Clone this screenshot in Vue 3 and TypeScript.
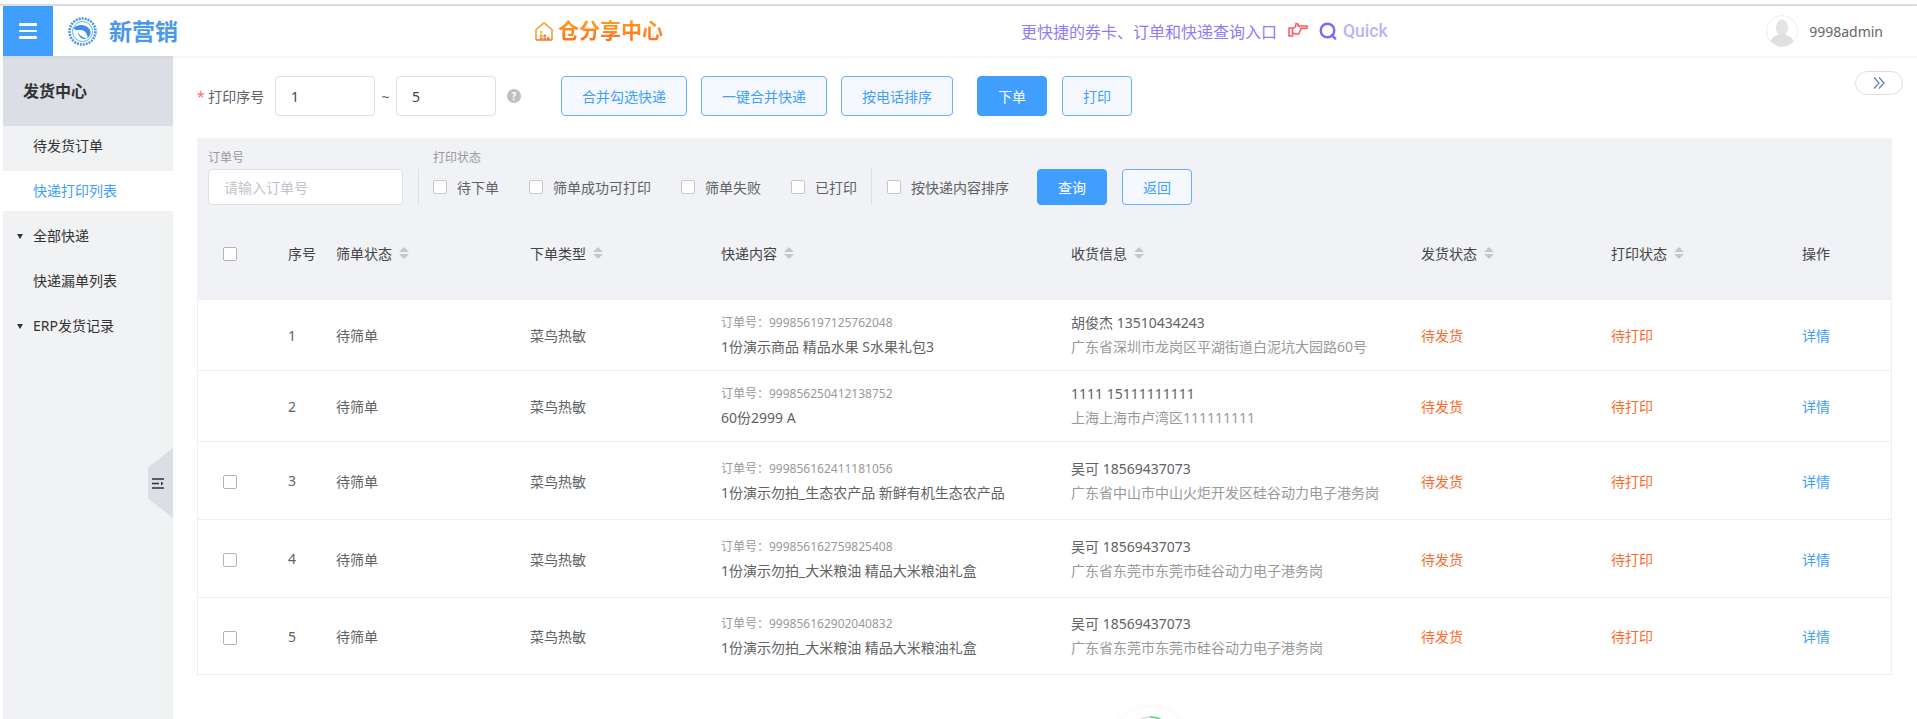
<template>
  <div class="app">
    <header class="topbar">
      <button type="button" class="menu-btn" aria-label="菜单">
        <span></span><span></span><span></span>
      </button>
      <svg class="logo" viewBox="0 0 29 29" fill="none">
        <circle cx="14.5" cy="14.5" r="13" stroke="#4a98ea" stroke-width="2.6" stroke-dasharray="2 1" />
        <circle cx="14.5" cy="14.5" r="10" fill="#fff" stroke="#4a98ea" stroke-width="0.8" />
        <path d="M5.5 11c4-4 12-4 16 1 2 3 1 7-2 9 0-5-3-8-7-8-3 0-5 1-7-2z" fill="#3f8fe4" />
        <path d="M10 15c2 4 5 6 9 6-3 2-8 1-9-6z" fill="#3f8fe4" />
      </svg>
      <span class="brand">新营销</span>

      <svg class="house" viewBox="0 0 18 19" fill="none">
        <path d="M1 18V7.500L9 1l8 6.500V18" stroke="#f59a23" stroke-width="1.500" />
        <path d="M1 18h16" stroke="#f5781f" stroke-width="1.500" />
        <rect x="5" y="9" width="2.500" height="2.500" fill="#f7c531" />
        <rect x="5" y="12.500" width="2.500" height="2.500" fill="#f7a631" />
        <rect x="8.500" y="12.500" width="2.500" height="2.500" fill="#f58a2a" />
        <rect x="5" y="15.500" width="2.500" height="2" fill="#f5781f" />
        <rect x="8.500" y="15.500" width="2.500" height="2" fill="#f5701f" />
        <rect x="12" y="15.500" width="2.500" height="2" fill="#f0601a" />
      </svg>
      <span class="share-title">仓分享中心</span>

      <span class="promo">更快捷的券卡、订单和快递查询入口</span>
      <svg class="hand" viewBox="0 0 20 15" fill="none" stroke="#ff5a5f" stroke-width="1.500">
        <path d="M1 6h3.500v8H1z" />
        <path d="M4.500 7 7.500 4.500 8 1.500l2 .5v2h9v2.200h-6.500l.5 1.300-1 1.500-.5 1.500-1 1.500H7l-2.500-1" />
      </svg>
      <svg class="quick-icon" viewBox="0 0 18 18" fill="none" stroke="#7a6af6" stroke-width="2.400">
        <circle cx="8.500" cy="8.500" r="6.800" />
        <path d="m12.800 13 3.400 3.600" stroke-linecap="round" />
      </svg>
      <span class="quick">Quick</span>

      <div class="user">
        <svg class="avatar" viewBox="0 0 32 32">
          <circle cx="16" cy="16" r="15.500" fill="#fff" stroke="#eee" />
          <ellipse cx="16" cy="12.500" rx="6" ry="8" fill="#e4e4e4" />
          <path d="M4.500 26c2-5 7-5.500 8.500-7h6c1.500 1.500 6.500 2 8.500 7-3 3.500-7 5.500-11.500 5.500S7.500 29.500 4.500 26z" fill="#e0e0e0" />
        </svg>
        <span>9998admin</span>
      </div>
    </header>

    <div class="body">
      <aside class="sidebar">
        <div class="side-title">发货中心</div>
        <nav class="side-nav">
          <div
            v-for="item in navItems"
            :key="item.label"
            class="side-item"
            :class="{ active: item.active }"
          >
            <i v-if="item.group" class="side-arrow"></i>
            {{ item.label }}
          </div>
        </nav>
        <div class="side-toggle">
          <svg viewBox="0 0 12 11" fill="none" stroke="#333" stroke-width="1.400">
            <path d="M0 1h12M0 5.500h7M0 10h12" />
            <path d="M9 3.500 11.500 5.500 9 7.500z" fill="#333" stroke="none" />
          </svg>
        </div>
      </aside>

      <main class="main">
        <div class="toolbar">
          <label class="field-label"><em>*</em> 打印序号</label>
          <input v-model="rangeFrom" class="input range-input" type="text" />
          <span class="tilde">~</span>
          <input v-model="rangeTo" class="input range-input" type="text" />
          <span class="help">?</span>
          <div class="actions">
            <button type="button" class="btn btn-plain">合并勾选快递</button>
            <button type="button" class="btn btn-plain">一键合并快递</button>
            <button type="button" class="btn btn-plain">按电话排序</button>
            <button type="button" class="btn btn-primary btn-order">下单</button>
            <button type="button" class="btn btn-plain btn-print">打印</button>
          </div>
          <button type="button" class="pill" aria-label="展开">
            <svg viewBox="0 0 12 12" fill="none" stroke="#5f7fb8" stroke-width="1.200">
              <path d="m1 .5 5 5.500-5 5.500M6 .5l5 5.500-5 5.500" />
            </svg>
          </button>
        </div>

        <section class="panel">
          <div class="filters">
            <div class="filter-group">
              <div class="filter-label">订单号</div>
              <input class="input order-input" type="text" placeholder="请输入订单号" />
            </div>
            <i class="divider"></i>
            <div class="filter-group">
              <div class="filter-label">打印状态</div>
              <div class="checks">
                <label v-for="s in printStates" :key="s" class="check">
                  <i class="box"></i>{{ s }}
                </label>
              </div>
            </div>
            <i class="divider divider-2"></i>
            <label class="check check-sort"><i class="box"></i>按快递内容排序</label>
            <button type="button" class="btn btn-primary btn-query">查询</button>
            <button type="button" class="btn btn-plain btn-back">返回</button>
          </div>

          <table class="table">
            <colgroup>
              <col v-for="(w, i) in colWidths" :key="i" :style="{ width: w + 'px' }" />
            </colgroup>
            <thead>
              <tr>
                <th class="cell-check"><i class="box box-row"></i></th>
                <th v-for="col in columns" :key="col.label">
                  {{ col.label }}<span v-if="col.sortable" class="sort"><i></i><i></i></span>
                </th>
              </tr>
            </thead>
            <tbody>
              <tr v-for="row in rows" :key="row.no" :class="{ short: !row.selectable }">
                <td class="cell-check"><i v-if="row.selectable" class="box box-row"></i></td>
                <td>{{ row.no }}</td>
                <td>待筛单</td>
                <td>菜鸟热敏</td>
                <td>
                  <div class="sub small">订单号：{{ row.orderNo }}</div>
                  <div class="line">{{ row.goods }}</div>
                </td>
                <td>
                  <div class="line">{{ row.receiver }}</div>
                  <div class="sub">{{ row.address }}</div>
                </td>
                <td class="warn">待发货</td>
                <td class="warn">待打印</td>
                <td class="link">详情</td>
              </tr>
            </tbody>
          </table>
        </section>
      </main>
    </div>

    <div class="float-ball">
      <svg viewBox="0 0 40 20" fill="none" stroke-width="1.500">
        <path d="M3 12C8 5 14 3 20 3" stroke="#d9d9d9" />
        <path d="M20 3c5 0 10 1 14 5" stroke="#4cd964" />
      </svg>
    </div>
  </div>
</template>

<script setup lang="ts">
import { ref } from 'vue'

interface OrderRow {
  no: number
  selectable: boolean
  orderNo: string
  goods: string
  receiver: string
  address: string
}

const rangeFrom = ref('1')
const rangeTo = ref('5')

const navItems = [
  { label: '待发货订单' },
  { label: '快递打印列表', active: true },
  { label: '全部快递', group: true },
  { label: '快递漏单列表' },
  { label: 'ERP发货记录', group: true },
]

const printStates = ['待下单', '筛单成功可打印', '筛单失败', '已打印']

const colWidths = [91, 48, 194, 191, 350, 350, 190, 191, 90]

const columns = [
  { label: '序号' },
  { label: '筛单状态', sortable: true },
  { label: '下单类型', sortable: true },
  { label: '快递内容', sortable: true },
  { label: '收货信息', sortable: true },
  { label: '发货状态', sortable: true },
  { label: '打印状态', sortable: true },
  { label: '操作' },
]

const rows: OrderRow[] = [
  {
    no: 1,
    selectable: false,
    orderNo: '999856197125762048',
    goods: '1份演示商品 精品水果 S水果礼包3',
    receiver: '胡俊杰 13510434243',
    address: '广东省深圳市龙岗区平湖街道白泥坑大园路60号',
  },
  {
    no: 2,
    selectable: false,
    orderNo: '999856250412138752',
    goods: '60份2999 A',
    receiver: '1111 15111111111',
    address: '上海上海市卢湾区111111111',
  },
  {
    no: 3,
    selectable: true,
    orderNo: '999856162411181056',
    goods: '1份演示勿拍_生态农产品 新鲜有机生态农产品',
    receiver: '吴可 18569437073',
    address: '广东省中山市中山火炬开发区硅谷动力电子港务岗',
  },
  {
    no: 4,
    selectable: true,
    orderNo: '999856162759825408',
    goods: '1份演示勿拍_大米粮油 精品大米粮油礼盒',
    receiver: '吴可 18569437073',
    address: '广东省东莞市东莞市硅谷动力电子港务岗',
  },
  {
    no: 5,
    selectable: true,
    orderNo: '999856162902040832',
    goods: '1份演示勿拍_大米粮油 精品大米粮油礼盒',
    receiver: '吴可 18569437073',
    address: '广东省东莞市东莞市硅谷动力电子港务岗',
  },
]
</script>

<style>
html,
body {
  margin: 0;
  background: #fff;
  overflow: hidden;
}
</style>

<style scoped>
.app {
  position: relative;
  height: 719px;
  overflow: hidden;
  display: flex;
  flex-direction: column;
  font-family: 'Noto Sans', 'Noto Sans CJK SC', sans-serif;
  font-size: 14px;
  color: #606266;
  background: #fff;
}

/* Top bar */
.topbar {
  flex: none;
  height: 50px;
  margin-top: 4px;
  padding-left: 3px;
  border-top: 2px solid #dcdcdf;
  display: flex;
  align-items: center;
  background: #fff;
  box-shadow: 0 1px 4px rgba(0, 0, 0, 0.06);
  position: relative;
  z-index: 2;
}

.menu-btn {
  width: 50px;
  height: 50px;
  border: 0;
  padding: 0;
  background: #409eff;
  display: flex;
  flex-direction: column;
  align-items: center;
  justify-content: center;
  gap: 4px;
}

.menu-btn span {
  width: 18px;
  height: 2.5px;
  border-radius: 1px;
  background: #fff;
}

.logo {
  width: 29px;
  height: 29px;
  margin-left: 15px;
  flex: none;
}

.brand {
  margin-left: 12px;
  font-size: 23px;
  font-weight: 700;
  line-height: 1;
  color: #4a98ea;
}

.house {
  width: 18px;
  height: 19px;
  margin-left: 357px;
  flex: none;
}

.share-title {
  margin-left: 5px;
  font-size: 21px;
  font-weight: 700;
  line-height: 1.2;
  background: linear-gradient(180deg, #ffa31a, #ff6a1f);
  -webkit-background-clip: text;
  background-clip: text;
  color: transparent;
}

.promo {
  margin-left: 358px;
  font-size: 16px;
  color: #8f7cf6;
}

.hand {
  width: 20px;
  height: 15px;
  margin-left: 11px;
  margin-top: -4px;
  flex: none;
}

.quick-icon {
  width: 18px;
  height: 18px;
  margin-left: 11px;
  flex: none;
}

.quick {
  margin-left: 6px;
  font-family: Roboto, sans-serif;
  font-size: 17.5px;
  font-weight: 500;
  color: #bdb2fb;
}

.user {
  margin-left: auto;
  padding-right: 34px;
  display: flex;
  align-items: center;
  gap: 11px;
  color: #666;
}

.avatar {
  width: 32px;
  height: 32px;
}

/* Sidebar */
.body {
  flex: 1;
  min-height: 0;
  display: flex;
}

.sidebar {
  position: relative;
  flex: none;
  width: 170px;
  margin-left: 3px;
  background: #f1f2f4;
  color: #333;
}

.side-title {
  box-sizing: border-box;
  height: 70px;
  padding: 0 0 2px 20px;
  display: flex;
  align-items: center;
  font-size: 16px;
  font-weight: 700;
  background: #dcdee6;
}

.side-nav {
  display: flex;
  flex-direction: column;
  gap: 5px;
}

.side-item {
  position: relative;
  box-sizing: border-box;
  height: 40px;
  padding: 0 0 2px 30px;
  display: flex;
  align-items: center;
}

.side-item.active {
  background: #fff;
  color: #409eff;
}

.side-arrow {
  position: absolute;
  left: 14px;
  top: 18px;
  border: 3.5px solid transparent;
  border-top: 5px solid #333;
  border-bottom: 0;
}

.side-toggle {
  position: absolute;
  right: 0;
  top: 392px;
  width: 25px;
  height: 70px;
  display: flex;
  align-items: center;
  padding-left: 4px;
  box-sizing: border-box;
  background: #dcdee6;
  clip-path: polygon(100% 0, 0 28%, 0 72%, 100% 100%);
}

.side-toggle svg {
  width: 12px;
  height: 11px;
}

/* Main */
.main {
  flex: 1;
  min-width: 0;
  padding: 20px 25px 0 24px;
}

.toolbar {
  height: 40px;
  display: flex;
  align-items: center;
}

.field-label {
  width: 78px;
  flex: none;
  color: #606266;
}

.field-label em {
  font-style: normal;
  color: #f56c6c;
}

.input {
  box-sizing: border-box;
  border: 1px solid #dcdfe6;
  border-radius: 4px;
  outline: none;
  background: #fff;
  font: inherit;
  color: #444;
}

.input::placeholder {
  color: #c0c4cc;
}

.range-input {
  width: 100px;
  height: 40px;
  padding: 0 15px;
}

.tilde {
  width: 21px;
  text-align: center;
}

.help {
  width: 14px;
  height: 14px;
  margin-left: 11px;
  border-radius: 50%;
  background: #c0c0c0;
  color: #fff;
  font-size: 10px;
  font-weight: 700;
  line-height: 14px;
  text-align: center;
}

.actions {
  margin-left: 40px;
  display: flex;
  gap: 14px;
}

.btn {
  box-sizing: border-box;
  height: 40px;
  padding: 0 20px;
  border-radius: 4px;
  font: inherit;
  white-space: nowrap;
}

.btn-plain {
  border: 1px solid #66b1ff;
  background: #f5f9ff;
  color: #409eff;
}

.btn-primary {
  border: 1px solid #409eff;
  background: #409eff;
  color: #fff;
}

.btn-order {
  margin-left: 10px;
}

.btn-print {
  margin-left: 1px;
}

.pill {
  align-self: flex-start;
  margin: -5px -11px 0 auto;
  width: 48px;
  height: 24px;
  padding: 0;
  border: 1px solid #dcdee6;
  border-radius: 12px;
  background: #fff;
  display: flex;
  align-items: center;
  justify-content: center;
}

.pill svg {
  width: 12px;
  height: 12px;
}

/* Filters + table */
.panel {
  margin-top: 22px;
  background: #f0f2f5;
}

.filters {
  height: 67px;
  box-sizing: border-box;
  padding: 13px 0 0 11px;
  display: flex;
  align-items: flex-end;
}

.filter-label {
  height: 18px;
  line-height: 14px;
  font-size: 12px;
  color: #999;
}

.order-input {
  display: block;
  width: 195px;
  height: 36px;
  padding: 0 15px;
}

.divider {
  width: 1px;
  height: 36px;
  margin: 0 14px 0 15px;
  background: #dcdfe6;
}

.divider-2 {
  margin-left: 14px;
  margin-right: 15px;
}

.checks {
  display: flex;
  gap: 30px;
  height: 36px;
  align-items: center;
}

.check {
  display: flex;
  align-items: center;
  height: 36px;
  color: #606266;
  white-space: nowrap;
}

.box {
  display: inline-block;
  box-sizing: border-box;
  width: 14px;
  height: 14px;
  margin-right: 10px;
  border: 1px solid #c4c6cc;
  border-radius: 2px;
  background: #fff;
}

.box-row {
  margin: 0;
  vertical-align: middle;
  border-color: #b4b4b4;
}

.btn-query {
  width: 70px;
  height: 36px;
  margin-left: 28px;
  padding: 0;
}

.btn-back {
  width: 70px;
  height: 36px;
  margin-left: 15px;
  padding: 0;
}

.table {
  width: 1695px;
  table-layout: fixed;
  border-collapse: separate;
  border-spacing: 0;
  background: #fff;
}

.table th {
  height: 95px;
  padding: 1px 0 0;
  box-sizing: border-box;
  background: #f0f2f5;
  font-weight: 400;
  color: #444;
  text-align: left;
  border-bottom: 1px solid #ebeef5;
}

.table td {
  height: 78px;
  padding: 0;
  box-sizing: border-box;
  border-bottom: 1px solid #ebeef5;
}

.table tr.short td {
  height: 71px;
}

.table tbody tr:last-child td {
  height: 77px;
}

.table tbody td:first-child {
  border-left: 1px solid #ebeef5;
}

.table tbody td:last-child {
  border-right: 1px solid #ebeef5;
}

.table .cell-check {
  padding-left: 26px;
}

.table tbody .cell-check {
  padding-left: 25px;
}

.sort {
  display: inline-flex;
  flex-direction: column;
  gap: 2px;
  margin-left: 7px;
  vertical-align: 7px;
}

.sort i {
  border: 5px solid transparent;
  border-top: 0;
  border-bottom: 5px solid #c4c7cf;
}

.sort i:last-child {
  border-bottom: 0;
  border-top: 5px solid #c4c7cf;
}

.line,
.sub {
  line-height: 24px;
  white-space: nowrap;
}

.sub {
  color: #999;
}

.small {
  font-size: 12px;
}

.warn {
  color: #ff6a2b;
}

.link {
  color: #409eff;
}

/* Floating widget peeking from the bottom edge */
.float-ball {
  position: absolute;
  left: 1110px;
  top: 707px;
  width: 80px;
  height: 80px;
  border-radius: 50%;
  background: #fff;
  box-shadow: 0 0 8px rgba(0, 0, 0, 0.05);
  z-index: 3;
}

.float-ball svg {
  display: block;
  width: 40px;
  height: 20px;
  margin: 7px auto 0;
}
</style>
